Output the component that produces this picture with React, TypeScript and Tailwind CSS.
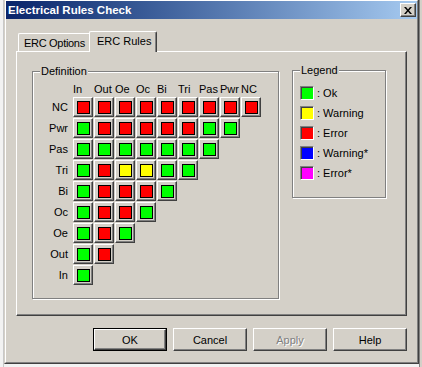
import React from 'react';

const cols = ['In', 'Out', 'Oe', 'Oc', 'Bi', 'Tri', 'Pas', 'Pwr', 'NC'];

const matrix: [string, string][] = [
  ['NC', 'rrrrrrrrr'],
  ['Pwr', 'grrrrrgg'],
  ['Pas', 'ggggggg'],
  ['Tri', 'gryygg'],
  ['Bi', 'grrrg'],
  ['Oc', 'grrg'],
  ['Oe', 'grg'],
  ['Out', 'gr'],
  ['In', 'g'],
];

const fill: Record<string, string> = {
  g: 'bg-[#00ff00]',
  r: 'bg-[#ff0000]',
  y: 'bg-[#ffff00]',
};

const legend = [
  { color: 'bg-[#00ff00]', label: ': Ok' },
  { color: 'bg-[#ffff00]', label: ': Warning' },
  { color: 'bg-[#ff0000]', label: ': Error' },
  { color: 'bg-[#0000ff]', label: ': Warning*' },
  { color: 'bg-[#ff00ff]', label: ': Error*' },
];

function Cell({ c }: { c: string }) {
  return (
    <div className="w-5 h-5 border border-t-white border-l-white border-r-[#404040] border-b-[#404040] shadow-[inset_-1px_-1px_0_#808080] bg-[#d4d0c8] pl-[3px] pt-[3px]">
      <div className={`w-[13px] h-[13px] border border-black ${fill[c]}`} />
    </div>
  );
}

function Button({ label, primary, disabled }: { label: string; primary?: boolean; disabled?: boolean }) {
  const inner = (
    <div
      className={`w-full h-full flex items-center justify-center border border-t-white border-l-white border-r-[#404040] border-b-[#404040] shadow-[inset_-1px_-1px_0_#808080] ${
        disabled ? 'text-[#808080] [text-shadow:1px_1px_0_#fff]' : 'text-black'
      }`}
    >
      {label}
    </div>
  );
  if (primary) {
    return <div className="w-[74px] h-[23px] border border-black">{inner}</div>;
  }
  return <div className="w-[74px] h-[23px]">{inner}</div>;
}

export default function App() {
  return (
    <div className="w-[422px] h-[367px] bg-[#f2f2f2] flex overflow-hidden font-[family-name:'Liberation_Sans',Arial,sans-serif] text-[11px] leading-[14px]">
      <div className="w-1 shrink-0 border-r border-[#c8c8c8]" />
      <div className="w-[415px] h-[365px] -mt-px shrink-0 border border-[#d4d0c8] border-r-[#404040] border-b-[#404040]">
        <div className="w-full h-full border border-white border-r-[#808080] border-b-[#808080] bg-[#d4d0c8] flex flex-col">
          {/* title bar */}
          <div className="h-[18px] flex items-center justify-between pl-[2px] pr-[1px] bg-gradient-to-r from-[#0a246a] to-[#a6caf0]">
            <span className="text-white font-bold text-[11.5px] whitespace-nowrap">Electrical Rules Check</span>
            <div className="w-4 h-[14px] flex items-center justify-center bg-[#d4d0c8] border border-t-white border-l-white border-r-[#404040] border-b-[#404040] shadow-[inset_-1px_-1px_0_#808080]">
              <svg width="8" height="7" viewBox="0 0 8 7">
                <path d="M0 0h2l2 2.5L6 0h2L5 3.5 8 7H6L4 4.5 2 7H0l3-3.5z" fill="#000" />
              </svg>
            </div>
          </div>

          {/* tabs */}
          <div className="mt-3 h-5 pl-3 flex items-end">
            <div className="w-[71px] h-[18px] pl-[5px] pt-[2px] border-l border-t border-white rounded-tl-[2px] text-black whitespace-nowrap tracking-[-0.3px]">
              ERC Options
            </div>
            <div className="relative z-10 w-[68px] h-[21px] -mb-px pl-[7px] pt-[2px] bg-[#d4d0c8] border-l border-t border-white border-r border-r-[#404040] shadow-[inset_-1px_0_0_#808080] rounded-t-[2px] text-black whitespace-nowrap">
              ERC Rules
            </div>
          </div>

          {/* panel */}
          <div className="mx-[10px] h-[265px] border border-white border-r-[#404040] border-b-[#404040] shadow-[inset_-1px_-1px_0_#808080] flex items-start pl-[15px] pt-[19px]">
            {/* definition */}
            <div className="relative w-[247px] h-[228px] border border-[#808080] shadow-[inset_1px_1px_0_#fff,1px_1px_0_#fff]">
              <span className="absolute -top-[8px] left-[7px] px-px bg-[#d4d0c8] text-black">Definition</span>
              <div className="pl-1 pt-[10px] grid grid-cols-[35px_repeat(9,20px)] gap-px">
                <div />
                {cols.map((c) => (
                  <div key={c} className="h-[14px] text-black whitespace-nowrap">
                    {c}
                  </div>
                ))}
                {matrix.map(([label, cells]) => (
                  <React.Fragment key={label}>
                    <div className="col-start-1 h-5 pr-1 flex items-center justify-end text-black">{label}</div>
                    {cells.split('').map((c, i) => (
                      <Cell key={i} c={c} />
                    ))}
                  </React.Fragment>
                ))}
              </div>
            </div>

            {/* legend */}
            <div className="relative ml-[13px] -mt-px w-[94px] h-[128px] border border-[#808080] shadow-[inset_1px_1px_0_#fff,1px_1px_0_#fff] pl-[7px] pt-[12px] flex flex-col">
              <span className="absolute -top-[8px] left-[7px] px-px bg-[#d4d0c8] text-black">Legend</span>
              {legend.map((l) => (
                <div key={l.label} className="h-5 flex items-center gap-[3px]">
                  <div className={`w-[14px] h-[14px] border border-t-[#808080] border-l-[#808080] border-r-white border-b-white shadow-[inset_1px_1px_0_#404040] ${l.color}`} />
                  <span className="text-black">{l.label}</span>
                </div>
              ))}
            </div>
          </div>

          {/* buttons */}
          <div className="mt-3 pr-[10px] flex justify-end gap-[6px]">
            <Button label="OK" primary />
            <Button label="Cancel" />
            <Button label="Apply" disabled />
            <Button label="Help" />
          </div>
        </div>
      </div>
      <div className="flex-1 bg-[#d4d0c8] border-l border-[#808080]" />
    </div>
  );
}
